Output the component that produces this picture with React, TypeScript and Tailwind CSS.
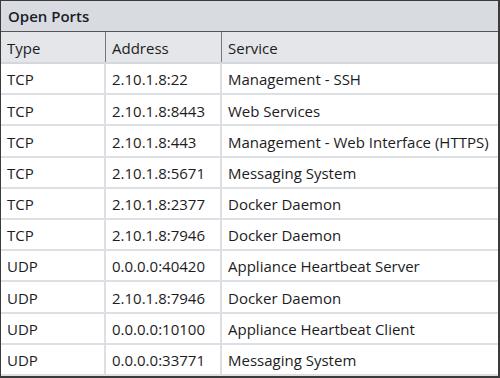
const ports = [
  { type: "TCP", address: "2.10.1.8:22", service: "Management - SSH" },
  { type: "TCP", address: "2.10.1.8:8443", service: "Web Services" },
  { type: "TCP", address: "2.10.1.8:443", service: "Management - Web Interface (HTTPS)" },
  { type: "TCP", address: "2.10.1.8:5671", service: "Messaging System" },
  { type: "TCP", address: "2.10.1.8:2377", service: "Docker Daemon" },
  { type: "TCP", address: "2.10.1.8:7946", service: "Docker Daemon" },
  { type: "UDP", address: "0.0.0.0:40420", service: "Appliance Heartbeat Server" },
  { type: "UDP", address: "2.10.1.8:7946", service: "Docker Daemon" },
  { type: "UDP", address: "0.0.0.0:10100", service: "Appliance Heartbeat Client" },
  { type: "UDP", address: "0.0.0.0:33771", service: "Messaging System" },
];

export default function App() {
  return (
    <div
      className="w-[500px] h-[378px] bg-white border border-[#3b3b3b] border-r-2 border-b-2 flex flex-col text-[15px] text-[#1c1c24] overflow-hidden"
      style={{ fontFamily: '"Open Sans", "Liberation Sans", sans-serif' }}
    >
      <div className="h-[31px] shrink-0 bg-[#d8dce2] border-b border-[#555] flex items-center px-[7px] font-semibold">
        Open Ports
      </div>

      <div className="h-[32px] shrink-0 bg-[#e4e6e9] border-b-2 border-[#d4d7dc] grid grid-cols-[105px_116px_1fr]">
        <div className="border-r border-[#777] flex items-center px-[6px] pt-[2px]">Type</div>
        <div className="border-r border-[#777] flex items-center px-[6px] pt-[2px]">Address</div>
        <div className="flex items-center px-[6px] pt-[2px]">Service</div>
      </div>

      <div className="flex flex-col">
        {ports.map((p) => (
          <div
            key={p.address + p.service}
            className="h-[31.2px] border-b-2 border-[#dcdfe3] grid grid-cols-[105px_116px_1fr]"
          >
            <div className="border-r-2 border-[#dcdfe3] flex items-center px-[6px] pt-[2px]">{p.type}</div>
            <div className="border-r-2 border-[#dcdfe3] flex items-center px-[6px] pt-[2px]">{p.address}</div>
            <div className="flex items-center px-[6px] pt-[2px] whitespace-nowrap">{p.service}</div>
          </div>
        ))}
      </div>
    </div>
  );
}
